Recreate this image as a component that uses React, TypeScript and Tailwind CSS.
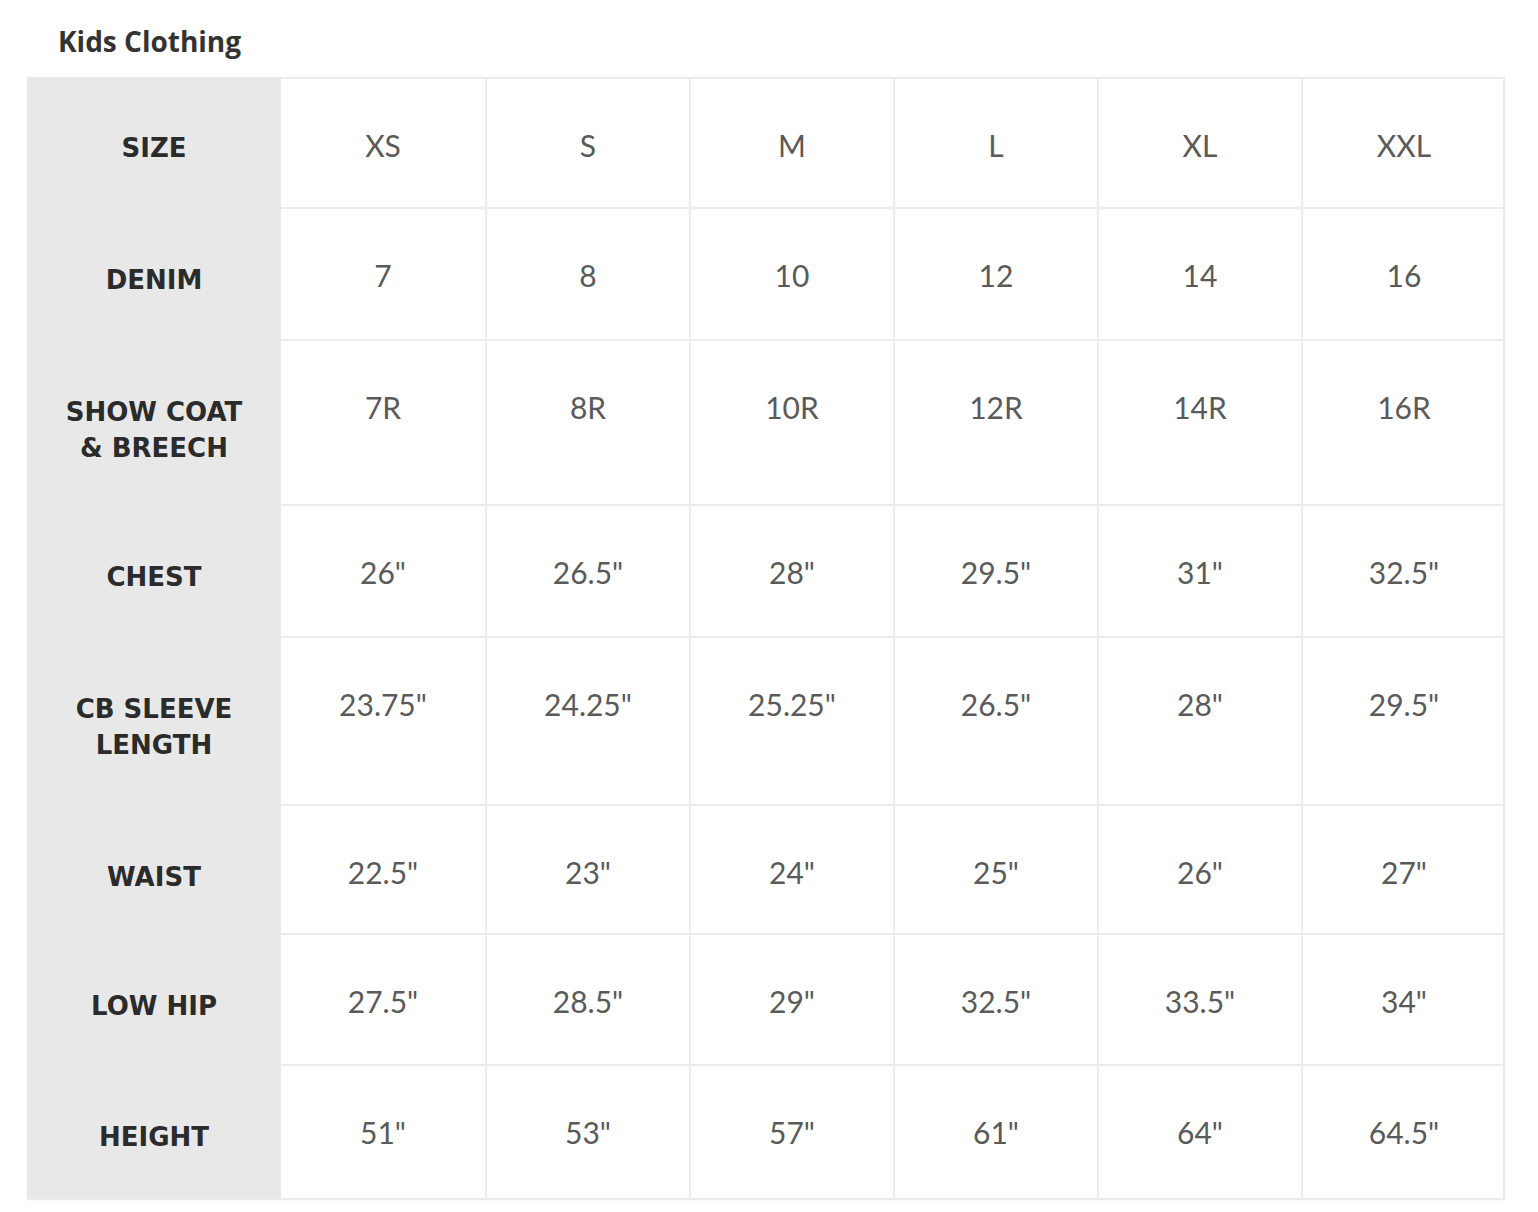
const sizes = ["XS", "S", "M", "L", "XL", "XXL"];

const rows: { label: string[]; values: string[]; h: string }[] = [
  { label: ["SIZE"], values: sizes, h: "h-[132px]" },
  { label: ["DENIM"], values: ["7", "8", "10", "12", "14", "16"], h: "h-[132px]" },
  { label: ["SHOW COAT", "& BREECH"], values: ["7R", "8R", "10R", "12R", "14R", "16R"], h: "h-[165px]" },
  { label: ["CHEST"], values: ['26"', '26.5"', '28"', '29.5"', '31"', '32.5"'], h: "h-[132px]" },
  { label: ["CB SLEEVE", "LENGTH"], values: ['23.75"', '24.25"', '25.25"', '26.5"', '28"', '29.5"'], h: "h-[168px]" },
  { label: ["WAIST"], values: ['22.5"', '23"', '24"', '25"', '26"', '27"'], h: "h-[129px]" },
  { label: ["LOW HIP"], values: ['27.5"', '28.5"', '29"', '32.5"', '33.5"', '34"'], h: "h-[131px]" },
  { label: ["HEIGHT"], values: ['51"', '53"', '57"', '61"', '64"', '64.5"'], h: "h-[132px]" },
];

export default function App() {
  return (
    <div className="w-[1538px] h-[1212px] overflow-hidden bg-white font-['Open_Sans',sans-serif]">
      <h1 className="pl-[58px] pt-[22px] h-[77px] text-[28px] font-bold text-[#333] leading-[38px]">
        Kids Clothing
      </h1>
      <div className="ml-[27px] w-[1478px] border-r-2 border-b-2 border-[#ebebeb] shadow-[0_0_4px_rgba(0,0,0,0.04)]">
        {rows.map((r, i) => (
          <div key={i} className={`flex ${r.h}`}>
            <div className="w-[254px] shrink-0 bg-[#e8e8e8] flex flex-col items-center pt-[53px]">
              {r.label.map((l) => (
                <span
                  key={l}
                  className="text-[26px] font-bold text-[#2b2b2b] leading-[36px] font-['DejaVu_Sans',sans-serif]"
                >
                  {l}
                </span>
              ))}
            </div>
            {r.values.map((v, j) => (
              <div
                key={j}
                className={`w-[204px] shrink-0 flex justify-center pt-[47px] border-[#ececec] ${
                  j > 0 ? "border-l-2" : ""
                } ${i === 0 ? "border-t-2" : ""} ${i < rows.length - 1 ? "border-b-2" : ""}`}
              >
                <span className="text-[30px] text-[#5a5a5a] leading-[38px] font-['Lato',sans-serif]">{v}</span>
              </div>
            ))}
          </div>
        ))}
      </div>
    </div>
  );
}
